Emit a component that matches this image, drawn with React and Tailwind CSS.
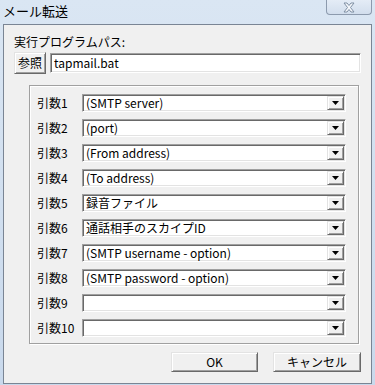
import React from 'react';

const font = "font-['MS_UI_Gothic','Noto_Sans_CJK_JP',sans-serif]";

const args = [
  { label: '引数1', value: '(SMTP server)' },
  { label: '引数2', value: '(port)' },
  { label: '引数3', value: '(From address)' },
  { label: '引数4', value: '(To address)' },
  { label: '引数5', value: '録音ファイル' },
  { label: '引数6', value: '通話相手のスカイプID' },
  { label: '引数7', value: '(SMTP username - option)' },
  { label: '引数8', value: '(SMTP password - option)' },
  { label: '引数9', value: '' },
  { label: '引数10', value: '' },
];

// sunken edit / combo frame
const sunken =
  'bg-white border border-t-[#a0a0a0] border-l-[#a0a0a0] border-b-white border-r-white shadow-[inset_1px_1px_0_#696969,inset_-1px_-1px_0_#e3e3e3]';

// raised button frame
const raised =
  'bg-[#f0f0f0] border border-t-[#e3e3e3] border-l-[#e3e3e3] border-b-[#696969] border-r-[#696969] shadow-[inset_1px_1px_0_#ffffff,inset_-1px_-1px_0_#a0a0a0]';

const Combo = ({ value }) => (
  <div className={`${sunken} flex items-stretch w-[264px] h-[18px] p-[1px]`}>
    <div className="flex-1 flex items-center pl-[2px] text-[12px] leading-[16px] text-black whitespace-nowrap">
      {value}
    </div>
    <div className={`${raised} w-[17px] flex items-center justify-center`}>
      <svg width="7" height="4" viewBox="0 0 7 4">
        <path d="M0 0h7L3.5 4z" fill="#000" />
      </svg>
    </div>
  </div>
);

const App = () => {
  return (
    <div className={`w-[375px] h-[385px] bg-gradient-to-b from-[#dae6f3] to-[#c9d9ec] flex flex-col ${font}`}>
      {/* Title bar */}
      <div className="h-[24px] flex items-start justify-between">
        <span className="pl-[3px] pt-[3px] text-[13px] leading-[16px] text-black">メール転送</span>
        <div className="mr-[3px] w-[46px] h-[15px] rounded-b-[4px] border border-t-0 border-[#8c9aad] bg-gradient-to-b from-[#e4ecf6] to-[#d2deed] flex items-center justify-center">
          <svg width="14" height="11" viewBox="0 0 14 11">
            <path
              d="M2 1h3l2 2.5L9 1h3L8.5 5.5 12 10H9L7 7.5 5 10H2l3.5-4.5z"
              fill="#f4f7fb"
              stroke="#7f8fa3"
              strokeWidth="1"
              strokeLinejoin="round"
            />
          </svg>
        </div>
      </div>

      {/* Client area */}
      <div className="mx-[3px] mb-[1px] flex-1 bg-[#f0f0f0] border border-[#7a8594] flex flex-col pl-[10px] pr-[10px]">
        <div className="pt-[10px] text-[12px] leading-[14px] text-black">実行プログラムパス:</div>
        <div className="mt-[3px] flex items-center gap-[4px]">
          <button className={`${raised} w-[32px] h-[22px] text-[12px] leading-[14px] text-black`}>参照</button>
          <div className={`${sunken} w-[311px] h-[20px] px-[3px] flex items-center text-[12px] leading-[16px] text-black`}>tapmail.bat</div>
        </div>

        {/* Group box */}
        <div className="mt-[11px] ml-[15px] w-[330px] h-[259px] border border-[#a0a0a0] shadow-[1px_1px_0_#ffffff,inset_1px_1px_0_#ffffff] flex flex-col gap-[7px] pt-[8px] pl-[7px]">
          {args.map((a) => (
            <div key={a.label} className="flex items-center h-[18px]">
              <span className="w-[45px] text-[12px] leading-[16px] text-black">{a.label}</span>
              <Combo value={a.value} />
            </div>
          ))}
        </div>

        {/* Buttons */}
        <div className="mt-[8px] flex justify-end gap-[15px]">
          <button className={`${raised} w-[87px] h-[20px] text-[12px] leading-[14px] text-black`}>OK</button>
          <button className={`${raised} w-[88px] h-[20px] text-[12px] leading-[14px] text-black`}>キャンセル</button>
        </div>
      </div>
    </div>
  );
};

export default App;
